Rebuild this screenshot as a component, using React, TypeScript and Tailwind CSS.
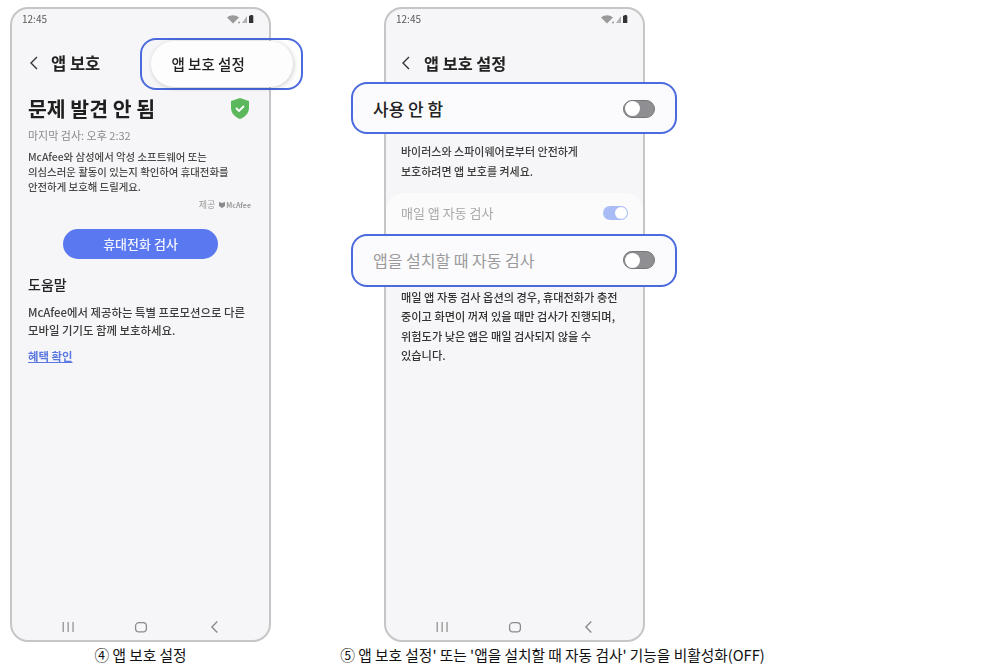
const FONT = "font-['Noto_Sans_CJK_KR','Noto_Sans',sans-serif]";

function StatusBar() {
  return (
    <div className="flex h-[12px] items-center justify-between pl-[10px] pr-[13px]">
      <span className="text-[10px] leading-none text-[#5a5a5a]">12:45</span>
      <svg width="30" height="10" viewBox="0 0 30 10">
        <path d="M1 3.500C4.500.6 9.500.6 13 3.500L7 9.500Z" fill="#9a9a9a" />
        <circle cx="13" cy="8.500" r="1" fill="#9a9a9a" />
        <path d="M21 2v7h-5z" fill="#b0b0b0" />
        <path d="M25 1h1.500l.8 1v7h-4.300V2z" fill="#333" />
      </svg>
    </div>
  );
}

function NavBar() {
  return (
    <div className="absolute bottom-[6px] left-0 flex h-[14px] w-full items-center">
      <svg width="261" height="14" viewBox="0 0 261 14" fill="none" stroke="#8a8a8a">
        <path d="M52 2v10M57 2v10M62 2v10" strokeWidth="1.200" />
        <rect x="125.500" y="2.500" width="11" height="9.500" rx="3.500" strokeWidth="1.300" />
        <path d="M208.500 1.500L203 7l5.500 5.500" strokeWidth="1.400" />
      </svg>
    </div>
  );
}

function Toggle() {
  return (
    <div className="flex h-[18px] w-[32px] items-center rounded-full border border-[#777] bg-[#8f8f93]">
      <div className="ml-[1px] h-[15px] w-[15px] rounded-full bg-white" />
    </div>
  );
}

function Chevron() {
  return (
    <svg width="10" height="14" viewBox="0 0 10 14" fill="none" stroke="#333" strokeWidth="1.400">
      <path d="M8 1L2 7l6 6" />
    </svg>
  );
}

function PhoneOne() {
  return (
    <div className="relative h-[635px] w-[261px] rounded-[18px] border-2 border-[#c6c6c6] bg-[#f6f6f8] pt-[4px] blur-[0.3px]">
      <StatusBar />
      <div className="mt-[25px] flex h-[26px] items-center pl-[17px]">
        <Chevron />
        <span className="ml-[12px] text-[16.500px] font-bold text-[#222]">앱 보호</span>
      </div>

      <div className="absolute left-[128px] top-[29px] flex h-[52px] w-[163px] items-center justify-center rounded-[16px] border-[2.500px] border-[#4a6ade]">
        <div className="flex h-[46px] w-[142px] items-center rounded-full bg-[#fdfdfe] pb-[1px] pl-[21px] text-[14.500px] font-medium text-[#222] shadow-[1px_1px_5px_rgba(0,0,0,0.2)]">
          앱 보호 설정
        </div>
      </div>

      <div className="mt-[20px] flex items-center justify-between pl-[16px] pr-[20px]">
        <span className="text-[20.500px] font-bold leading-[24px] text-[#1f1f1f]">문제 발견 안 됨</span>
        <svg width="18" height="21" viewBox="0 0 18 21">
          <path d="M9 0l9 3v7c0 5-4 9-9 11-5-2-9-6-9-11V3z" fill="#5cb85c" />
          <path d="M5 10l3 3 5-5" fill="none" stroke="#fff" strokeWidth="1.800" />
        </svg>
      </div>

      <div className="mt-[7px] pl-[16px] text-[11px] leading-[16px] text-[#8a8a8a]">마지막 검사: 오후 2:32</div>
      <div className="mt-[6px] pl-[16px] text-[10.400px] font-medium leading-[15px] text-[#4a4a4a]">
        <div>McAfee와 삼성에서 악성 소프트웨어 또는</div>
        <div>의심스러운 활동이 있는지 확인하여 휴대전화를</div>
        <div>안전하게 보호해 드릴게요.</div>
      </div>

      <div className="mt-[4px] flex items-center justify-end gap-[4px] pr-[18px] text-[#9a9a9a]">
        <span className="text-[9px] leading-[14px]">제공</span>
        <span className="flex items-center gap-[1px] text-[7px] font-bold leading-[14px]">
          <svg width="6" height="6" viewBox="0 0 6 6">
            <path d="M0 0l3 1 3-1v4L3 6 0 4z" fill="#8a8a8a" />
          </svg>
          McAfee
        </span>
      </div>

      <div className="mt-[17px] flex justify-center pr-[1px]">
        <div className="flex h-[30px] w-[155px] items-center justify-center rounded-full bg-[#5a78f0] pl-[1px] text-[13px] font-medium text-[#f2f4ff]">
          휴대전화 검사
        </div>
      </div>

      <div className="mt-[15px] pl-[16px] text-[14px] font-medium leading-[20px] text-[#222]">도움말</div>
      <div className="mt-[9px] pl-[16px] text-[11.400px] font-medium leading-[18px] text-[#3c3c3c]">
        <div>McAfee에서 제공하는 특별 프로모션으로 다른</div>
        <div>모바일 기기도 함께 보호하세요.</div>
      </div>
      <div className="mt-[9px] pl-[16px] text-[11.400px] font-bold leading-[16px] text-[#5a78e0] underline">혜택 확인</div>

      <NavBar />
    </div>
  );
}

function PhoneTwo() {
  return (
    <div className="relative h-[635px] w-[261px] rounded-[18px] border-2 border-[#c6c6c6] bg-[#f6f6f8] pt-[4px] blur-[0.3px]">
      <StatusBar />
      <div className="mt-[25px] flex h-[26px] items-center pl-[15px]">
        <Chevron />
        <span className="ml-[13px] text-[16.300px] font-bold text-[#222]">앱 보호 설정</span>
      </div>

      <div className="absolute left-[-35px] top-[73px] flex h-[52px] w-[326px] items-center justify-between rounded-[16px] border-[2.500px] border-[#4a6ade] bg-[#fbfbfd] pl-[20px] pr-[20px] pt-[1px]">
        <span className="text-[17px] font-medium text-[#222]">사용 안 함</span>
        <Toggle />
      </div>

      <div className="mt-[65px] pl-[15px] text-[11px] font-medium leading-[20px] text-[#3c3c3c]">
        <div>바이러스와 스파이웨어로부터 안전하게</div>
        <div>보호하려면 앱 보호를 켜세요.</div>
      </div>

      <div className="mt-[12px] h-[90px] rounded-t-[18px] bg-[#fbfbfc] pl-[15px] pr-[15px] pt-[10px]">
        <div className="flex items-center justify-between">
          <span className="text-[13px] leading-[20px] text-[#a8a8a8]">매일 앱 자동 검사</span>
          <div className="flex h-[14px] w-[25px] items-center justify-end rounded-full bg-[#aabcf5] pr-[1px]">
            <div className="h-[12px] w-[12px] rounded-full bg-white" />
          </div>
        </div>
      </div>

      <div className="absolute left-[-35px] top-[225px] flex h-[53px] w-[326px] items-center justify-between rounded-[16px] border-[2.500px] border-[#4a6ade] bg-[#fbfbfd] pb-[1px] pl-[20px] pr-[20px]">
        <span className="text-[16px] text-[#9a9a9a]">앱을 설치할 때 자동 검사</span>
        <Toggle />
      </div>

      <div className="mt-[5px] pl-[15px] text-[11.200px] font-medium leading-[19.300px] text-[#333]">
        <div>매일 앱 자동 검사 옵션의 경우, 휴대전화가 충전</div>
        <div>중이고 화면이 꺼져 있을 때만 검사가 진행되며,</div>
        <div>위험도가 낮은 앱은 매일 검사되지 않을 수</div>
        <div>있습니다.</div>
      </div>

      <NavBar />
    </div>
  );
}

export default function App() {
  return (
    <div className={`h-[670px] w-[999px] overflow-hidden bg-white pl-[10px] pt-[7px] ${FONT}`}>
      <div className="flex gap-[113px]">
        <div className="flex w-[261px] flex-col items-center">
          <PhoneOne />
          <p className="mt-[3px] whitespace-nowrap text-[14.700px] leading-[20px] text-[#111]">④ 앱 보호 설정</p>
        </div>
        <div className="flex w-[261px] flex-col items-center">
          <PhoneTwo />
          <p className="ml-[76px] mt-[3px] whitespace-nowrap text-[14.700px] leading-[20px] text-[#111]">
            ⑤ 앱 보호 설정' 또는 '앱을 설치할 때 자동 검사' 기능을 비활성화(OFF)
          </p>
        </div>
      </div>
    </div>
  );
}
